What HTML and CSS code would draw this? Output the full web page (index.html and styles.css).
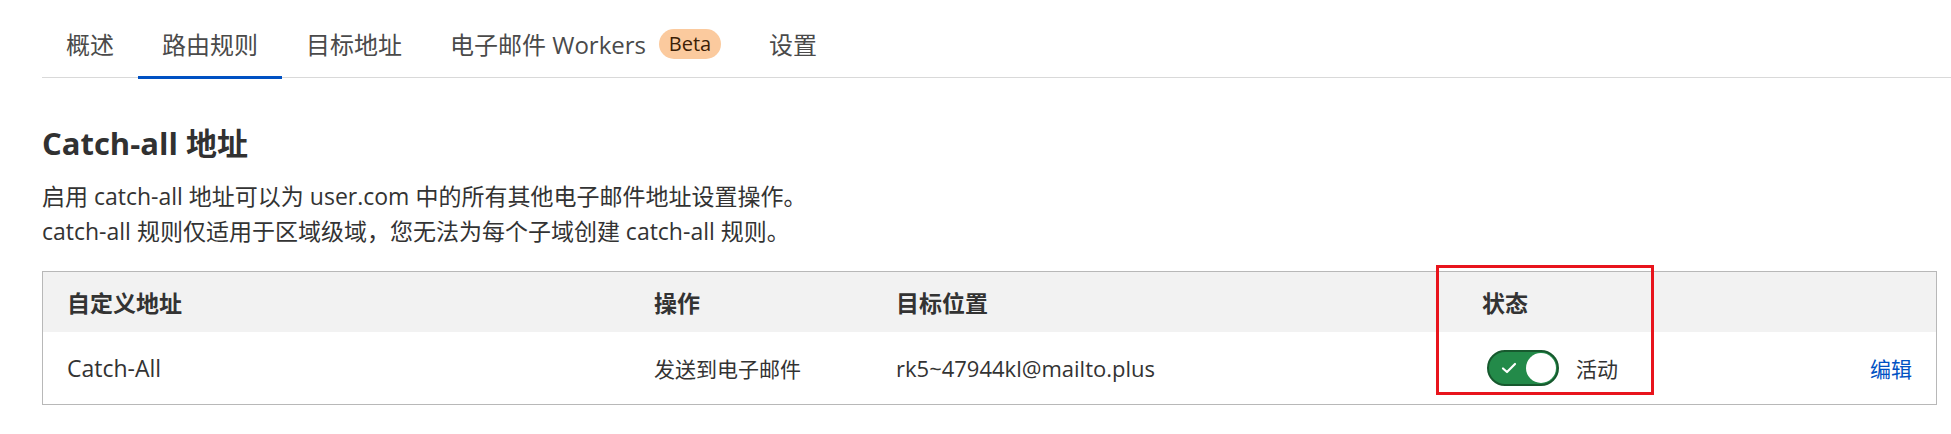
FILE: index.html
```html
<!DOCTYPE html>
<html lang="zh-CN">
<head>
    <meta charset="UTF-8">
    <meta name="viewport" content="width=device-width, initial-scale=1.0">
    <title>电子邮件路由 - 路由规则</title>
    <link rel="stylesheet" href="styles.css">
</head>
<body>
    <nav class="tabs">
        <a class="tab">概述</a>
        <a class="tab active">路由规则</a>
        <a class="tab">目标地址</a>
        <a class="tab">电子邮件 Workers <span class="badge">Beta</span></a>
        <a class="tab">设置</a>
    </nav>

    <section class="catch-all">
        <h2>Catch-all 地址</h2>
        <p class="intro">启用 catch-all 地址可以为 user.com 中的所有其他电子邮件地址设置操作。<br>catch-all 规则仅适用于区域级域，您无法为每个子域创建 catch-all 规则。</p>

        <div class="rules-table">
            <div class="row head">
                <div class="cell">自定义地址</div>
                <div class="cell">操作</div>
                <div class="cell">目标位置</div>
                <div class="cell">状态</div>
                <div class="cell"></div>
            </div>
            <div class="row">
                <div class="cell name">Catch-All</div>
                <div class="cell small">发送到电子邮件</div>
                <div class="cell email">rk5~47944kl@mailto.plus</div>
                <div class="cell status">
                    <span class="toggle">
                        <svg class="check" width="16" height="12" viewBox="0 0 16 12"><path d="M2 6.5 L6 10 L14 2" fill="none" stroke="#fff" stroke-width="2.2" stroke-linecap="round" stroke-linejoin="round"/></svg>
                        <span class="knob"></span>
                    </span>
                    <span class="small">活动</span>
                </div>
                <div class="cell edit"><a class="link">编辑</a></div>
            </div>
            <div class="highlight"></div>
        </div>
    </section>
</body>
</html>
```

FILE: styles.css
```css
/* Email routing page */
body {
    margin: 0;
    font-family: "Open Sans", "Noto Sans CJK SC", sans-serif;
    color: #333;
    background: #fff;
}

.tabs {
    display: flex;
    margin-left: 42px;
    border-bottom: 1px solid #d9d9d9;
}

.tab {
    position: relative;
    display: flex;
    align-items: center;
    height: 67px;
    padding: 10px 24px 0;
    font-size: 24px;
    color: #4a4a4a;
}

.tab.active::after {
    content: "";
    position: absolute;
    left: 0;
    right: 0;
    bottom: -2px;
    height: 3px;
    background: #0051c3;
}

.badge {
    display: inline-flex;
    align-items: center;
    justify-content: center;
    width: 62px;
    height: 30px;
    margin-left: 13px;
    border-radius: 15px;
    background: #fbca9e;
    color: #3c1e06;
    font-size: 20px;
}

.catch-all {
    margin: 0 14px 0 42px;
    padding-top: 45px;
}

h2 {
    margin: 0;
    font-size: 31px;
    line-height: 40px;
    font-weight: 700;
    color: #313131;
}

.intro {
    margin: 16px 0 22px;
    font-size: 23px;
    line-height: 35px;
}

.rules-table {
    position: relative;
    border: 1px solid #b8b8b8;
}

.row {
    display: grid;
    grid-template-columns: 587px 242px 586px 1fr auto;
    align-items: center;
    height: 72px;
    font-size: 23px;
}

.row.head {
    height: 60px;
    background: #f2f2f2;
    font-weight: 700;
}

.cell {
    padding: 0 24px;
}

.small {
    font-size: 21px;
}

.email {
    font-size: 22px;
}

.status {
    display: flex;
    align-items: center;
    gap: 17px;
}

.toggle {
    position: relative;
    display: inline-flex;
    align-items: center;
    box-sizing: border-box;
    width: 72px;
    height: 36px;
    margin-left: 5px;
    padding-left: 12px;
    border: 2px solid #17592e;
    border-radius: 18px;
    background: #238a49;
}

.knob {
    position: absolute;
    top: 1px;
    right: 1px;
    width: 30px;
    height: 30px;
    border-radius: 50%;
    background: #fff;
}

.edit {
    text-align: right;
}

.link {
    font-size: 21px;
    color: #0051c3;
}

.highlight {
    position: absolute;
    left: 1393px;
    top: -7px;
    width: 212px;
    height: 124px;
    border: 3px solid #e8141c;
}
```
